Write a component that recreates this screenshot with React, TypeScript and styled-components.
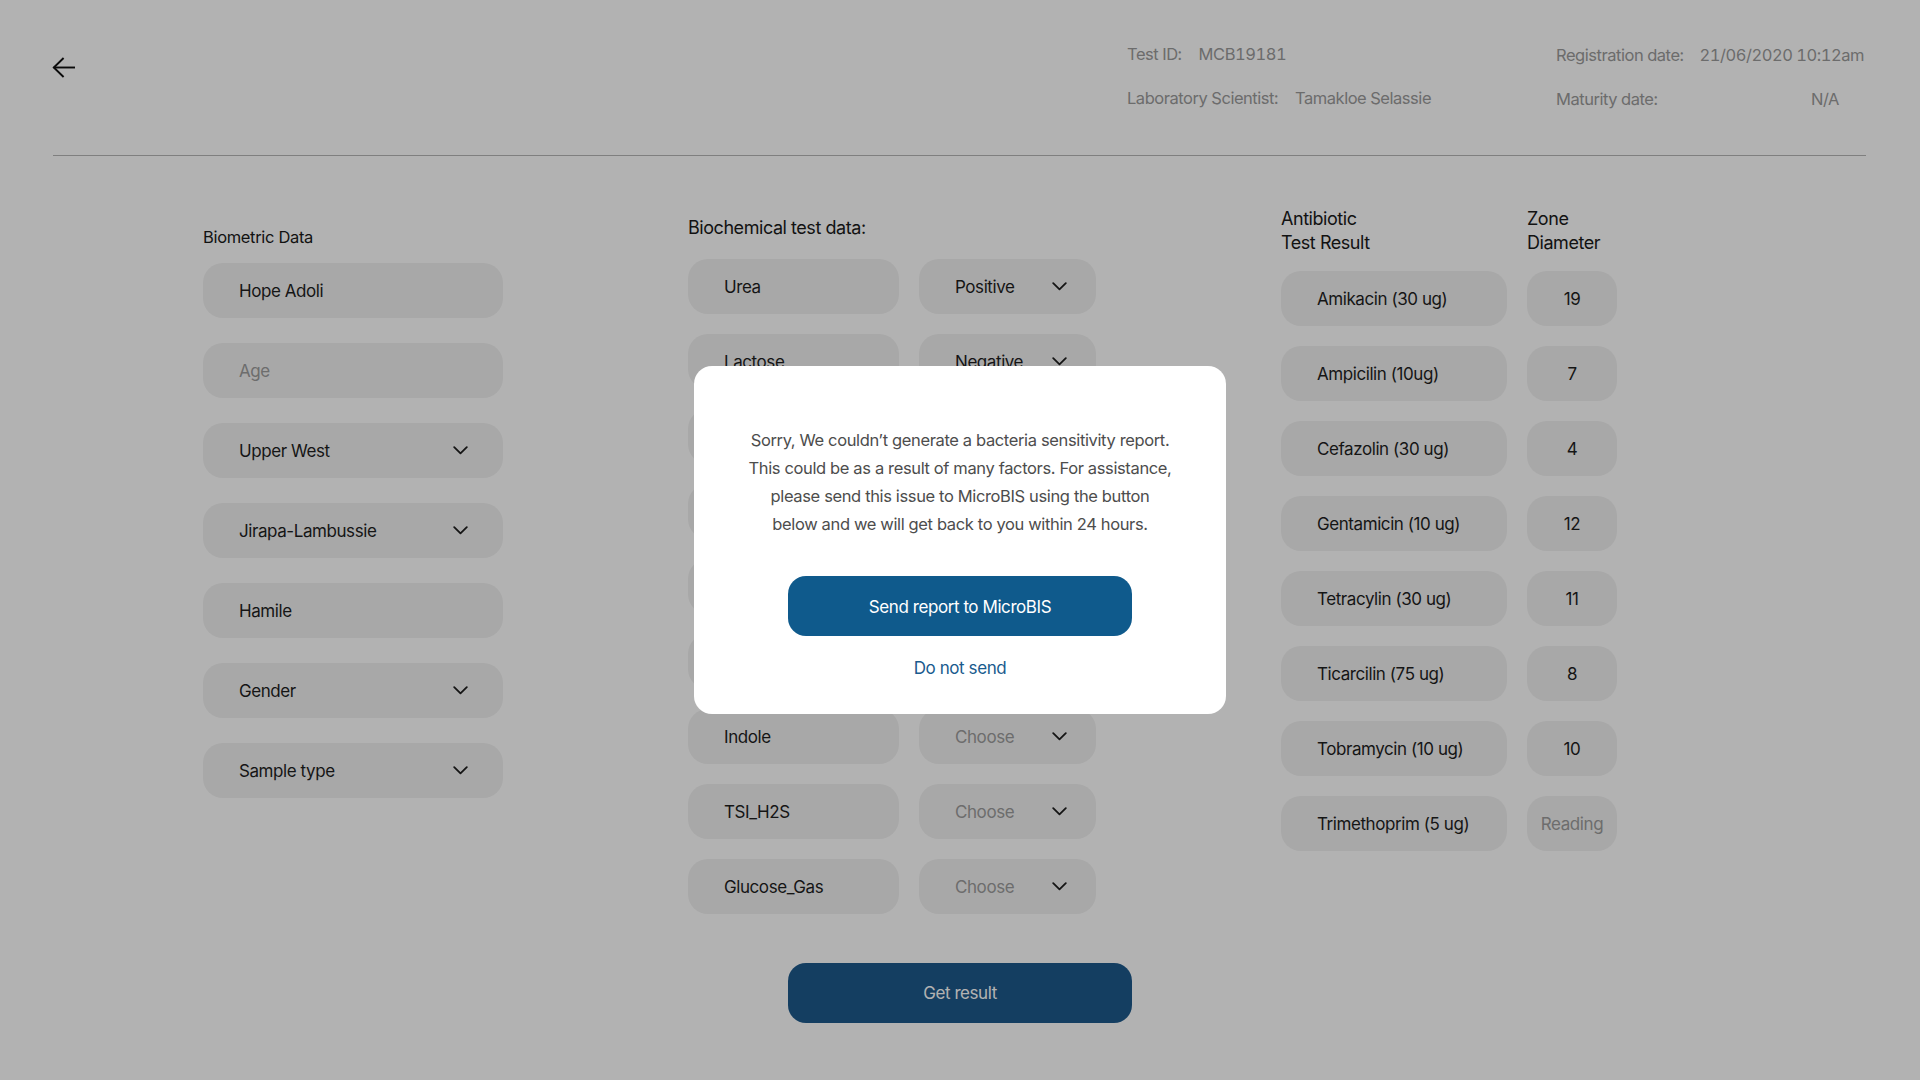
import React from "react";
import styled, { createGlobalStyle } from "styled-components";

const GlobalStyle = createGlobalStyle`
  html, body {
    margin: 0;
    padding: 0;
    background: #ffffff;
    font-family: "Inter", "Noto Sans", "Liberation Sans", sans-serif;
    color: #1f1f1f;
    overflow: hidden;
  }
  * { box-sizing: border-box; }
`;

const Page = styled.div`
  width: 1920px;
  height: 1080px;
  background: #ffffff;
  position: relative;
`;

const Header = styled.header`
  display: flex;
  align-items: flex-start;
  height: 155px;
  padding: 44px 54px 0 52px;
`;

const BackButton = styled.button`
  border: none;
  background: transparent;
  padding: 0;
  margin-top: 12px;
  width: 24px;
  height: 22px;
  display: flex;
  align-items: center;
  justify-content: center;
  cursor: pointer;
  color: #111;
`;

const MetaGroup = styled.div`
  margin-left: auto;
  width: 429px;
  display: flex;
  flex-direction: column;
  gap: 24px;
`;

const MetaRow = styled.div`
  display: flex;
  gap: 17px;
`;

const MetaGrid = styled.div`
  width: 310px;
  display: grid;
  grid-template-columns: auto 1fr;
  column-gap: 16px;
  row-gap: 24px;
  padding-top: 1px;
`;

const MetaText = styled.span<{ $end?: boolean }>`
  font-size: 16.5px;
  line-height: 20px;
  color: #9b9b9b;
  white-space: nowrap;
  letter-spacing: -0.028em;
  font-variant-numeric: tabular-nums;
  ${(p) => (p.$end ? "justify-self: end; padding-right: 27px;" : "")}
`;

const Divider = styled.hr`
  margin: 0 54px 0 53px;
  border: none;
  height: 1px;
  background: #b6b6b6;
`;

const Main = styled.main`
  display: flex;
  align-items: flex-start;
  gap: 185px;
  padding: 51px 0 0 203px;
`;

const Column = styled.section<{ $width: number; $top: number }>`
  width: ${(p) => p.$width}px;
  padding-top: ${(p) => p.$top}px;
  display: flex;
  flex-direction: column;
`;

const Label = styled.div`
  font-size: 16.5px;
  line-height: 20px;
  color: #1a1a1a;
  margin-bottom: 16px;
  letter-spacing: -0.02em;
`;

const Heading = styled.div<{ $gap: number }>`
  font-size: 18px;
  line-height: 24px;
  color: #1a1a1a;
  margin-bottom: ${(p) => p.$gap}px;
  letter-spacing: -0.025em;
`;

const FieldStack = styled.div`
  display: flex;
  flex-direction: column;
  gap: 25px;
`;

const PairGrid = styled.div<{ $cols: string }>`
  display: grid;
  grid-template-columns: ${(p) => p.$cols};
  column-gap: 20px;
  row-gap: 20px;
`;

const Field = styled.div<{ $muted?: boolean; $center?: boolean; $padRight?: number }>`
  height: 55px;
  border-radius: 20px;
  background: #f1f1f1;
  display: flex;
  align-items: center;
  justify-content: ${(p) => (p.$center ? "center" : "space-between")};
  padding: ${(p) => (p.$center ? "0" : `0 ${p.$padRight ?? 36}px 0 36px`)};
  font-size: 17px;
  color: ${(p) => (p.$muted ? "#9c9c9c" : "#1f1f1f")};
  letter-spacing: -0.025em;
  white-space: nowrap;
`;

const Chevron = () => (
  <svg width="15" height="9" viewBox="0 0 15 9" fill="none">
    <polyline
      points="1.2,1.2 7.5,7.4 13.8,1.2"
      stroke="#1f1f1f"
      strokeWidth="1.8"
      strokeLinecap="round"
      strokeLinejoin="round"
    />
  </svg>
);

const Footer = styled.div`
  display: flex;
  justify-content: center;
  margin-top: 49px;
`;

const PrimaryButton = styled.button<{ $height: number }>`
  width: 344px;
  height: ${(p) => p.$height}px;
  border: none;
  border-radius: 18px;
  background: #1d598c;
  color: #ffffff;
  font-family: "Inter", "Noto Sans", "Liberation Sans", sans-serif;
  font-size: 17px;
  letter-spacing: -0.025em;
  cursor: pointer;
`;

const Overlay = styled.div`
  position: fixed;
  inset: 0;
  background: rgba(0, 0, 0, 0.3);
  display: flex;
  align-items: center;
  justify-content: center;
`;

const Modal = styled.div`
  width: 532px;
  height: 348px;
  background: #ffffff;
  border-radius: 18px;
  display: flex;
  flex-direction: column;
  align-items: center;
  padding: 60px 0 0;
`;

const ModalText = styled.p`
  margin: 0 0 38px;
  font-size: 16.5px;
  line-height: 28px;
  color: #4d4d4d;
  text-align: center;
  letter-spacing: -0.022em;
`;

const ModalButton = styled(PrimaryButton)`
  background: #0f5a8c;
  padding-top: 3px;
`;

const LinkButton = styled.button`
  margin-top: 22px;
  border: none;
  background: transparent;
  padding: 0;
  font-family: "Inter", "Noto Sans", "Liberation Sans", sans-serif;
  font-size: 17px;
  line-height: 20px;
  color: #1a5b8e;
  letter-spacing: -0.025em;
  cursor: pointer;
`;

const biometric: { value: string; placeholder?: boolean; select?: boolean }[] = [
  { value: "Hope Adoli" },
  { value: "Age", placeholder: true },
  { value: "Upper West", select: true },
  { value: "Jirapa-Lambussie", select: true },
  { value: "Hamile" },
  { value: "Gender", select: true },
  { value: "Sample type", select: true },
];

const biochemical: { name: string; value: string }[] = [
  { name: "Urea", value: "Positive" },
  { name: "Lactose", value: "Negative" },
  { name: "Citrate", value: "Choose" },
  { name: "Oxidase", value: "Choose" },
  { name: "Catalase", value: "Choose" },
  { name: "Motility", value: "Choose" },
  { name: "Indole", value: "Choose" },
  { name: "TSI_H2S", value: "Choose" },
  { name: "Glucose_Gas", value: "Choose" },
];

const antibiotics: { name: string; zone: string }[] = [
  { name: "Amikacin (30 ug)", zone: "19" },
  { name: "Ampicilin (10ug)", zone: "7" },
  { name: "Cefazolin (30 ug)", zone: "4" },
  { name: "Gentamicin (10 ug)", zone: "12" },
  { name: "Tetracylin (30 ug)", zone: "11" },
  { name: "Ticarcilin (75 ug)", zone: "8" },
  { name: "Tobramycin (10 ug)", zone: "10" },
  { name: "Trimethoprim (5 ug)", zone: "Reading" },
];

export default function App() {
  return (
    <>
      <GlobalStyle />
      <Page>
        <Header>
          <BackButton aria-label="Back">
            <svg width="24" height="21" viewBox="0 0 24 21" fill="none">
              <path d="M23 10.5H1.6" stroke="#111" strokeWidth="1.9" />
              <path
                d="M11.6 1L1.8 10.5L11.6 20"
                stroke="#111"
                strokeWidth="1.9"
                strokeLinejoin="miter"
              />
            </svg>
          </BackButton>
          <MetaGroup>
            <MetaRow>
              <MetaText>Test ID:</MetaText>
              <MetaText>MCB19181</MetaText>
            </MetaRow>
            <MetaRow>
              <MetaText>Laboratory Scientist:</MetaText>
              <MetaText>Tamakloe Selassie</MetaText>
            </MetaRow>
          </MetaGroup>
          <MetaGrid>
            <MetaText>Registration date:</MetaText>
            <MetaText>21/06/2020 10:12am</MetaText>
            <MetaText>Maturity date:</MetaText>
            <MetaText $end>N/A</MetaText>
          </MetaGrid>
        </Header>
        <Divider />

        <Main>
          <Column $width={300} $top={20}>
            <Label>Biometric Data</Label>
            <FieldStack>
              {biometric.map((f) => (
                <Field key={f.value} $muted={f.placeholder} $padRight={35}>
                  <span>{f.value}</span>
                  {f.select && <Chevron />}
                </Field>
              ))}
            </FieldStack>
          </Column>

          <Column $width={408} $top={9}>
            <Heading $gap={19}>Biochemical test data:</Heading>
            <PairGrid $cols="211px 177px">
              {biochemical.map((b) => (
                <React.Fragment key={b.name}>
                  <Field>{b.name}</Field>
                  <Field $muted={b.value === "Choose"} $padRight={29}>
                    <span>{b.value}</span>
                    <Chevron />
                  </Field>
                </React.Fragment>
              ))}
            </PairGrid>
          </Column>

          <Column $width={336} $top={0}>
            <PairGrid $cols="226px 90px">
              <Heading $gap={16}>
                Antibiotic
                <br />
                Test Result
              </Heading>
              <Heading $gap={16}>
                Zone
                <br />
                Diameter
              </Heading>
            </PairGrid>
            <PairGrid $cols="226px 90px">
              {antibiotics.map((a) => (
                <React.Fragment key={a.name}>
                  <Field>{a.name}</Field>
                  <Field $center $muted={a.zone === "Reading"}>
                    {a.zone}
                  </Field>
                </React.Fragment>
              ))}
            </PairGrid>
          </Column>
        </Main>

        <Footer>
          <PrimaryButton $height={60}>Get result</PrimaryButton>
        </Footer>

        <Overlay>
          <Modal role="dialog" aria-modal="true">
            <ModalText>
              Sorry, We couldn’t generate a bacteria sensitivity report.
              <br />
              This could be as a result of many factors. For assistance,
              <br />
              please send this issue to MicroBIS using the button
              <br />
              below and we will get back to you within 24 hours.
            </ModalText>
            <ModalButton $height={60}>Send report to MicroBIS</ModalButton>
            <LinkButton>Do not send</LinkButton>
          </Modal>
        </Overlay>
      </Page>
    </>
  );
}
